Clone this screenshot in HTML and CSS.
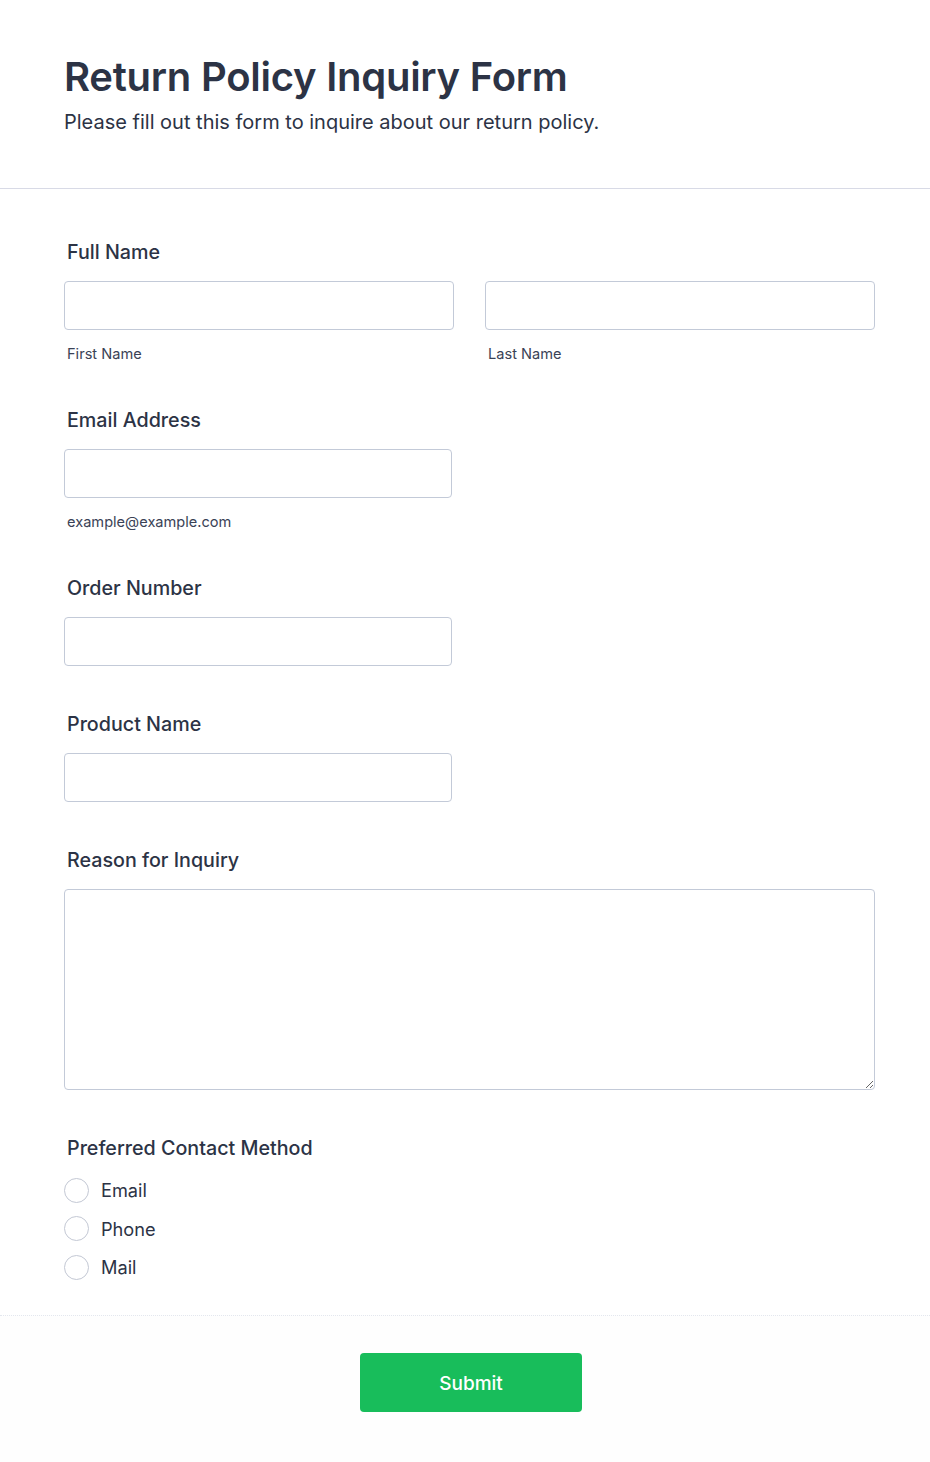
FILE: index.html
```html
<!DOCTYPE html>
<html lang="en">
<head>
  <meta charset="UTF-8">
  <meta name="viewport" content="width=device-width, initial-scale=1">
  <title>Return Policy Inquiry Form</title>
  <link rel="stylesheet" href="styles.css">
</head>
<body>

<div class="form-header">
  <h1>Return Policy Inquiry Form</h1>
  <p>Please fill out this form to inquire about our return policy.</p>
</div>

<form class="form-body">
  <div class="field">
    <label class="field-label">Full Name</label>
    <div class="name-row">
      <div class="name-col">
        <input type="text" class="input">
        <span class="sublabel">First Name</span>
      </div>
      <div class="name-col">
        <input type="text" class="input">
        <span class="sublabel">Last Name</span>
      </div>
    </div>
  </div>

  <div class="field">
    <label class="field-label">Email Address</label>
    <input type="email" class="input input-half">
    <span class="sublabel">example@example.com</span>
  </div>

  <div class="field field-plain">
    <label class="field-label">Order Number</label>
    <input type="text" class="input input-half">
  </div>

  <div class="field field-plain">
    <label class="field-label">Product Name</label>
    <input type="text" class="input input-half">
  </div>

  <div class="field field-plain">
    <label class="field-label">Reason for Inquiry</label>
    <textarea class="input textarea"></textarea>
  </div>

  <div class="field field-radio">
    <label class="field-label">Preferred Contact Method</label>
    <div class="radio-list">
      <label class="radio"><input type="radio" name="contact"><span class="radio-mark"></span>Email</label>
      <label class="radio"><input type="radio" name="contact"><span class="radio-mark"></span>Phone</label>
      <label class="radio"><input type="radio" name="contact"><span class="radio-mark"></span>Mail</label>
    </div>
  </div>
</form>

<div class="form-footer">
  <button type="button" class="submit">Submit</button>
</div>

</body>
</html>
```

FILE: styles.css
```css
body {
  margin: 0;
  font-family: Inter, "Noto Sans", sans-serif;
  color: #2c3345;
  background: #fff;
}

.form-header {
  padding: 53px 64px 52px;
  border-bottom: 1px solid #d8dae6;
}

.form-header h1 {
  margin: 0 0 7px;
  font-size: 40px;
  line-height: 48px;
  font-weight: 600;
  letter-spacing: -0.25px;
}

.form-header p {
  margin: 0;
  font-size: 20px;
  line-height: 28px;
}

.form-body {
  padding: 50px 55px 28px 64px;
}

.field {
  display: flex;
  flex-direction: column;
  margin-bottom: 43px;
}

.field-plain {
  margin-bottom: 45px;
}

.field-radio {
  margin-bottom: 0;
}

.field-label {
  font-size: 19.7px;
  line-height: 26px;
  font-weight: 500;
  margin: 0 0 16px 3px;
}

.name-row {
  display: flex;
  gap: 31px;
}

.name-col {
  flex: 1;
  display: flex;
  flex-direction: column;
}

.input {
  box-sizing: border-box;
  height: 49px;
  border: 1px solid #c3cad8;
  border-radius: 4px;
  background: #fff;
  font-family: inherit;
  font-size: 16px;
  padding: 0 12px;
}

.input-half {
  width: 388px;
}

.textarea {
  height: 201px;
  resize: vertical;
  padding: 10px 12px;
}

.sublabel {
  margin: 14px 0 0 3px;
  font-size: 14.6px;
  line-height: 20px;
  color: #3a4256;
}

.field-radio .field-label {
  margin-bottom: 10px;
}

.radio-list {
  display: flex;
  flex-direction: column;
}

.radio {
  display: flex;
  align-items: center;
  height: 38.5px;
  font-size: 18.2px;
  cursor: pointer;
}

.radio input {
  display: none;
}

.radio-mark {
  box-sizing: border-box;
  width: 25px;
  height: 25px;
  border: 1px solid #c3c8d4;
  border-radius: 50%;
  margin-right: 12px;
}

.form-footer {
  border-top: 1px dotted #e3e7ee;
  background: #fefefe;
  padding: 37px 0 50px;
  display: flex;
  justify-content: center;
}

.submit {
  width: 222px;
  height: 59px;
  border: none;
  border-radius: 4px;
  background: #18bd5b;
  color: #fff;
  font-family: inherit;
  font-size: 19px;
  font-weight: 500;
  line-height: 59px;
  margin-left: 12px;
  cursor: pointer;
}
```
